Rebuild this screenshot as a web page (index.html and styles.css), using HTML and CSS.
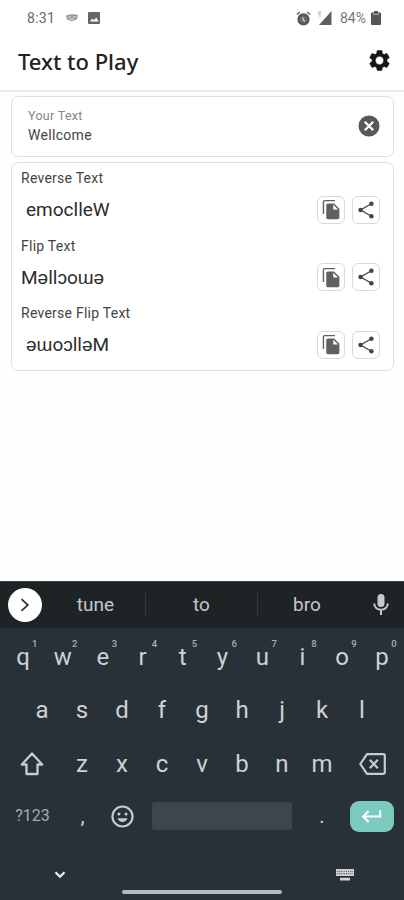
FILE: index.html
```html
<!DOCTYPE html>
<html lang="en">
<head>
<meta charset="utf-8">
<title>Text to Play</title>
<link rel="stylesheet" href="styles.css">
</head>
<body>
<svg class="defs" width="0" height="0">
  <symbol id="copy" viewBox="0 0 24 24"><path d="M16 1H4c-1.100 0-2 .9-2 2v14h1.600V2.600H16V1zm-1 4 6 6v10c0 1.100-.9 2-2 2H7.990C6.890 23 6 22.100 6 21l.01-14c0-1.100.89-2 1.990-2h7zm-1 7h5.500L14 6.500V12z"/></symbol>
  <symbol id="share" viewBox="0 0 24 24"><path d="M18.500 4.500 5.500 12l13 7.500" fill="none" stroke="currentColor" stroke-width="1.600"/><circle cx="18.500" cy="4.500" r="2.700"/><circle cx="5.500" cy="12" r="2.700"/><circle cx="18.500" cy="19.500" r="2.700"/></symbol>
</svg>
<div class="status">
  <span class="clock">8:31</span>
  <svg class="s-face" viewBox="0 0 14 8"><path d="M1 1.500Q7-.5 13 1l-1 4Q7 8.500 2 5.500z" fill="#999"/><path d="M3 3h3M8 3h3M4 5.200h5" stroke="#ddd" fill="none"/></svg>
  <svg class="s-img" viewBox="0 0 12 12"><rect width="12" height="12" rx="1" fill="#666"/><path d="M2 9.500 4.300 6.500 6 8.300 8.200 5.500 10.500 9.500z" fill="#fff"/></svg>
  <svg class="s-alarm" viewBox="0 0 14 14"><circle cx="7" cy="7.800" r="4.800" fill="#666" stroke="#555" stroke-width="1.800"/><path d="M.8 3.300 3.600 1M13.200 3.300 10.400 1" stroke="#666" stroke-width="1.400"/><path d="M6.500 5.500v2.800l2 1.300" stroke="#ddd" fill="none"/></svg>
  <svg class="s-signal" viewBox="0 0 15 14"><path d="M14.500 0v14H2z" fill="#606060"/><path d="M1 1h3M1 3h3M2 5h2" stroke="#aaa"/></svg>
  <span class="pct">84%</span>
  <svg class="s-batt" viewBox="0 0 10 14"><path d="M3 0h4v1.500h2q1 0 1 1V13q0 1-1 1H1q-1 0-1-1V2.500q0-1 1-1h2z" fill="#555"/><path d="M2 3.200h6" stroke="#ccc"/></svg>
</div>
<header class="bar">
  <h1>Text to Play</h1>
  <svg class="gear" viewBox="0 0 24 24"><path d="M19.140 12.940c.04-.3.060-.61.060-.94 0-.32-.02-.64-.07-.94l2.030-1.580c.18-.14.230-.41.120-.61l-1.920-3.320c-.12-.22-.37-.29-.59-.22l-2.390.96c-.5-.38-1.030-.7-1.620-.94l-.36-2.540c-.04-.24-.24-.41-.48-.41h-3.840c-.24 0-.43.170-.47.410l-.36 2.540c-.59.240-1.130.570-1.620.940l-2.390-.96c-.22-.08-.47 0-.59.220L2.740 8.870c-.12.210-.08.470.120.610l2.030 1.580c-.05.300-.09.630-.09.940s.02.640.070.940l-2.030 1.580c-.18.140-.23.410-.12.610l1.920 3.320c.12.220.370.290.590.220l2.390-.96c.5.380 1.030.7 1.620.940l.36 2.540c.05.240.240.410.480.410h3.840c.24 0 .44-.17.470-.41l.36-2.540c.59-.24 1.130-.56 1.620-.94l2.390.96c.22.080.470 0 .59-.22l1.920-3.320c.12-.22.070-.47-.12-.61l-2.010-1.580zM12 16a4 4 0 1 1 0-8 4 4 0 0 1 0 8z" stroke="currentColor" stroke-width=".5"/></svg>
</header>
<main>
  <section class="card input">
    <div><div class="hint">Your Text</div><div class="value">Wellcome</div></div>
    <svg class="clear" viewBox="0 0 22 22"><circle cx="11" cy="11" r="10.500" fill="#585858"/><path d="M6.800 6.800l8.400 8.400M15.200 6.800l-8.400 8.400" stroke="#fff" stroke-width="2.300"/></svg>
  </section>
  <section class="card results">
    <div class="item"><div class="label">Reverse Text</div><div class="row"><span class="out ind">emoclleW</span><span class="btn"><svg class="i-copy"><use href="#copy"/></svg></span><span class="btn"><svg class="i-share"><use href="#share"/></svg></span></div></div>
    <div class="item"><div class="label">Flip Text</div><div class="row"><span class="out">Mǝllɔoɯǝ</span><span class="btn"><svg class="i-copy"><use href="#copy"/></svg></span><span class="btn"><svg class="i-share"><use href="#share"/></svg></span></div></div>
    <div class="item"><div class="label">Reverse Flip Text</div><div class="row"><span class="out ind">ǝɯoɔllǝM</span><span class="btn"><svg class="i-copy"><use href="#copy"/></svg></span><span class="btn"><svg class="i-share"><use href="#share"/></svg></span></div></div>
  </section>
</main>
<div class="keyboard">
  <div class="suggest">
    <span class="more"><svg viewBox="0 0 12 12"><path d="M3 1l5.500 5L3 11" fill="none" stroke="#333" stroke-width="1.500"/></svg></span>
    <span class="word w1">tune</span><span class="word w2">to</span><span class="word w3">bro</span>
    <svg class="mic" viewBox="0 0 16 22"><rect x="4.500" y="0" width="7" height="13" rx="3.500" fill="#c8c9cb"/><path d="M1.200 9.500a6.800 6.300 0 0 0 13.600 0M8 16v5" fill="none" stroke="#c8c9cb" stroke-width="2"/></svg>
  </div>
  <div class="keys k1"><span>q<sup>1</sup></span><span>w<sup>2</sup></span><span>e<sup>3</sup></span><span>r<sup>4</sup></span><span>t<sup>5</sup></span><span>y<sup>6</sup></span><span>u<sup>7</sup></span><span>i<sup>8</sup></span><span>o<sup>9</sup></span><span>p<sup>0</sup></span></div>
  <div class="keys k2"><span>a</span><span>s</span><span>d</span><span>f</span><span>g</span><span>h</span><span>j</span><span>k</span><span>l</span></div>
  <div class="keys k3">
    <span class="wide"><svg class="shift" viewBox="0 0 24 24"><path d="M12 1.500 1.800 12.500H6.500V22h11v-9.500h4.700z" fill="none" stroke="#c6cbce" stroke-width="2.300" stroke-linejoin="round"/></svg></span>
    <span>z</span><span>x</span><span>c</span><span>v</span><span>b</span><span>n</span><span>m</span>
    <span class="wide"><svg class="back" viewBox="0 0 27 22"><path d="M8 1.200h16.500q1.300 0 1.300 1.300v17q0 1.300-1.300 1.300H8L1.300 11z" fill="none" stroke="#c6cbce" stroke-width="2.200" stroke-linejoin="round"/><path d="M10.800 6.800l8 8.400M18.800 6.800l-8 8.400" stroke="#c6cbce" stroke-width="2.200"/></svg></span>
  </div>
  <div class="keys k4">
    <span class="sym">?123</span><span class="comma">,</span>
    <span class="emoji"><svg viewBox="0 0 24 24"><circle cx="12" cy="12" r="10.500" fill="none" stroke="#c6cbce" stroke-width="2.200"/><circle cx="8.300" cy="9.300" r="1.600" fill="#c6cbce"/><circle cx="15.700" cy="9.300" r="1.600" fill="#c6cbce"/><path d="M6.800 13.800h10.400Q15.500 17.800 12 17.800t-5.200-4z" fill="#c6cbce"/></svg></span>
    <span class="space"></span><span class="dot">.</span>
    <span class="enter"><svg viewBox="0 0 22 14"><path d="M20 1v6.500H3M8 1.800 2.300 7.500 8 13.200" fill="none" stroke="#fff" stroke-width="2.200"/></svg></span>
  </div>
  <div class="nav">
    <svg class="down" viewBox="0 0 12 8"><path d="M1.500 1.300 6 5.800l4.500-4.500" fill="none" stroke="#eee" stroke-width="2.200"/></svg>
    <span class="home"></span>
    <svg class="kbd" viewBox="0 0 18 12"><path d="M0 0h18v7H0zM4 8.800h10v2.700H4z" fill="#d0d3d5"/><path d="M1 2.300h16M1 4.700h16" stroke="#3a444a" stroke-width=".9" stroke-dasharray="1.200 1"/></svg>
  </div>
</div>
</body>
</html>
```
FILE: styles.css
```css
* { box-sizing: border-box; }
html { background: #283138; }
body { margin: 0; width: 404px; height: 900px; overflow: hidden; display: flex; flex-direction: column; background: #fff; font-family: Roboto, "Liberation Sans", sans-serif; color: #333; }
svg { display: block; flex: none; fill: currentColor; }
.defs { position: absolute; }

.status { height: 36px; display: flex; align-items: center; padding: 0 23px 0 27px; font-size: 14px; color: #666; }
.clock { width: 38px; letter-spacing: .3px; }
.s-face { width: 14px; height: 8px; margin-right: 9px; }
.s-img { width: 12px; height: 12px; }
.s-alarm { width: 15px; height: 15px; margin-left: auto; margin-right: 6px; }
.s-signal { width: 15px; height: 14px; margin-right: 8px; }
.pct { width: 31px; color: #777; }
.s-batt { width: 10px; height: 14px; }

.bar { height: 56px; display: flex; align-items: center; justify-content: space-between; padding: 0 12px 6px 18px; border-bottom: 2px solid #e9e9e9; color: #161616; }
h1 { margin: 0; font: 500 22px/28px "Noto Sans", sans-serif; color: #222; padding-top: 1px; }
.gear { width: 25px; height: 25px; }

main { flex: 1; padding: 4px 10px 0 11px; background: #fefefe; }
.card { border: 1.500px solid #dedede; border-radius: 7px; background: #fff; }
.input { height: 61px; display: flex; align-items: center; justify-content: space-between; padding: 0 13px 1px 16px; }
.hint { font-size: 12.500px; line-height: 18px; letter-spacing: .3px; color: #858585; }
.value { font-size: 14px; line-height: 21px; letter-spacing: .3px; color: #444; }
.clear { width: 22px; height: 22px; }
.results { height: 209px; margin-top: 5px; padding: 5px 13px 0 9px; }
.item { height: 67.500px; }
.label { font-size: 14px; line-height: 21px; color: #444; letter-spacing: .25px; }
.row { display: flex; align-items: center; height: 41px; gap: 7px; }
.out { flex: 1; font-size: 19px; line-height: 28px; color: #2c2c2c; white-space: nowrap; padding-top: 1px; }
.ind { padding-left: 5px; }
.btn { width: 28px; height: 28px; display: grid; place-items: center; border: 1px solid #d9d9d9; border-radius: 6px; color: #606060; }
.i-copy { width: 21px; height: 21px; }
.i-share { width: 20px; height: 20px; color: #444; }

.keyboard { height: 319px; flex: none; background: #283138; color: #cdd2d5; display: flex; flex-direction: column; }
.suggest { height: 47px; flex: none; display: flex; align-items: center; background: #1e2326; border-top: 1px solid #444; padding-left: 8px; color: #c6c7c9; }
.more { width: 34px; height: 34px; border-radius: 50%; background: #fff; display: grid; place-items: center; }
.more svg { width: 14px; height: 14px; }
.word { font-size: 19px; text-align: center; line-height: 24px; }
.w1 { width: 104px; border-right: 1px solid #343a3e; padding-left: 4px; }
.w2 { width: 112px; border-right: 1px solid #343a3e; }
.w3 { width: 98px; }
.mic { width: 16px; height: 22px; margin-left: 17px; }
.keys { display: flex; align-items: center; height: 53.500px; flex: none; font-size: 24px; line-height: 30px; }
.keys > span { flex: 1; text-align: center; position: relative; }
.k1 { padding: 4px 2px 0 3px; }
.k2 { padding: 4px 22px 0; }
.k3 { padding: 4px 2px 0; }
.k4 { padding: 2px 10px 0 12px; }
sup { position: absolute; top: -4px; left: 29px; font-size: 9.500px; line-height: 12px; font-weight: 500; color: #aab0b4; }
.keys > .wide { flex: none; width: 60px; display: grid; place-items: center; }
.shift { width: 24px; height: 24px; }
.back { width: 27px; height: 22px; }
.keys > .sym { flex: none; width: 41px; font-size: 16px; color: #a4abb0; }
.keys > .comma { flex: none; width: 58px; font-size: 21px; padding-left: 1px; }
.keys > .emoji { flex: none; width: 22px; }
.emoji svg { width: 23px; height: 23px; }
.keys > .space { flex: none; width: 140px; height: 28px; margin-left: 19px; border-radius: 3px; background: #3d464c; }
.keys > .dot { font-size: 20px; padding-left: 2px; }
.keys > .enter { flex: none; width: 44px; height: 31px; border-radius: 9px; background: #7bcabe; display: grid; place-items: center; }
.enter svg { width: 21px; height: 14px; margin-right: 1px; }
.nav { flex: 1; display: flex; align-items: center; padding: 0 50px 0 54px; }
.down { width: 12px; height: 8px; margin-top: 8px; }
.home { width: 160px; height: 4px; border-radius: 2px; background: #b5b8ba; margin: 42px auto 0 56px; }
.kbd { width: 18px; height: 12px; margin-top: 8px; }
```
